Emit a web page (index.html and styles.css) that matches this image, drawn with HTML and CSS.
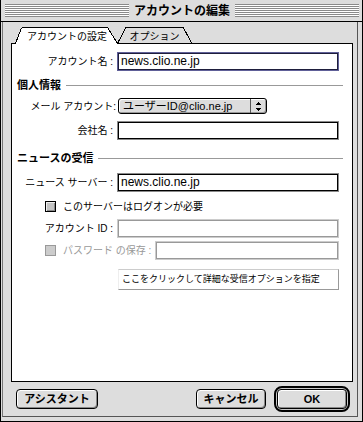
FILE: index.html
```html
<!DOCTYPE html>
<html lang="ja">
<head>
<meta charset="utf-8">
<title>アカウントの編集</title>
<link rel="stylesheet" href="styles.css">
</head>
<body>
<div class="window">
  <div class="titlebar">
    <div class="stripes"></div>
    <div class="title">アカウントの編集</div>
    <div class="stripes"></div>
  </div>
  <div class="content">
    <svg class="tabs" width="342" height="17" viewBox="0 0 342 17" shape-rendering="crispEdges">
      <path d="M106.5 16.5 L114.5 1 L115.5 0.5 H171.5 L172.5 1 L181 16.5" fill="#dddddd" stroke="#000"/>
      <path d="M0 17 V16 H4 L10 1 H97 L107 17 Z" fill="#fff"/>
      <path d="M0.5 17 V16.5 H4.5 L10 2 L11.5 0.5 H96.5 L106.5 16.5 H341.5 V17" fill="none" stroke="#000"/>
      <text class="tab-label" x="56" y="13" text-anchor="middle">アカウントの設定</text>
      <text class="tab-label" x="143.5" y="13" text-anchor="middle">オプション</text>
    </svg>
    <div class="panel">
      <div class="row r-name">
        <span class="label">アカウント名 :</span>
        <div class="field focus">news.clio.ne.jp</div>
      </div>
      <div class="heading h-personal"><span class="heading-text">個人情報</span><i class="rule"></i></div>
      <div class="row r-mail">
        <span class="label label-mail">メール アカウント:</span>
        <div class="popup">
          <span class="popup-text">ユーザーID@clio.ne.jp</span>
          <span class="popup-arrows">
            <svg width="5" height="9" viewBox="0 0 5 9" shape-rendering="crispEdges"><polygon points="2.5,0 5,3 0,3" fill="#000"/><polygon points="0,6 5,6 2.5,9" fill="#000"/></svg>
          </span>
        </div>
      </div>
      <div class="row r-company">
        <span class="label">会社名 :</span>
        <div class="field"></div>
      </div>
      <div class="heading h-news"><span class="heading-text">ニュースの受信</span><i class="rule"></i></div>
      <div class="row r-server">
        <span class="label">ニュース サーバー :</span>
        <div class="field">news.clio.ne.jp</div>
      </div>
      <div class="check-row r-logon">
        <span class="checkbox"></span>
        <span class="check-label">このサーバーはログオンが必要</span>
      </div>
      <div class="row r-account">
        <span class="label">アカウント ID :</span>
        <div class="field disabled"></div>
      </div>
      <div class="check-row r-password">
        <span class="checkbox disabled"></span>
        <span class="check-label disabled">パスワード の保存 :</span>
        <div class="field disabled pw"></div>
      </div>
      <div class="bevel">ここをクリックして詳細な受信オプションを指定</div>
    </div>
    <div class="footer">
      <div class="btn btn-assist">アシスタント</div>
      <div class="btn btn-cancel">キャンセル</div>
      <div class="default-ring"><div class="btn btn-ok">OK</div></div>
    </div>
  </div>
</div>
</body>
</html>
```

FILE: styles.css
```css
* { box-sizing: border-box; }
html, body { margin: 0; padding: 0; }
body {
  width: 363px;
  height: 422px;
  overflow: hidden;
  background: #dddddd;
  color: #000;
  font-family: "Liberation Sans", "Noto Sans CJK JP", sans-serif;
}
.window {
  width: 363px;
  height: 422px;
  border: 1px solid #000;
  border-top: 0;
  background: #dddddd;
  display: flex;
  flex-direction: column;
}
.titlebar {
  flex: none;
  height: 22px;
  border-bottom: 1px solid #000;
  display: flex;
  align-items: center;
  gap: 5px;
  padding: 0 3px 0 4px;
}
.stripes {
  flex: 1;
  height: 13px;
  background: repeating-linear-gradient(to bottom, #8a8a8a 0 1px, #ffffff 1px 2px);
}
.title {
  font-weight: bold;
  font-size: 12px;
  line-height: 14px;
  white-space: nowrap;
}
.content {
  flex: 1;
  margin: 0 4px 4px 1px;
  border-left: 1px solid #777;
  border-right: 1px solid #555;
  border-bottom: 1px solid #555;
  padding: 5px 4px 0 8px;
  display: flex;
  flex-direction: column;
}
.tabs { display: block; flex: none; }
.tab-label {
  font-family: "Liberation Sans", "Noto Sans CJK JP", sans-serif;
  font-size: 10px;
  fill: #000;
}
.panel {
  flex: none;
  width: 342px;
  height: 338px;
  background: #fff;
  border: 1px solid #000;
  border-top: 0;
  display: flex;
  flex-direction: column;
}
.row {
  display: grid;
  grid-template-columns: 101px 220px;
  column-gap: 5px;
  align-items: center;
}
.label {
  font-size: 10px;
  line-height: 13px;
  text-align: right;
  white-space: nowrap;
}
.label-mail { margin-right: -3px; }
.field {
  width: 220px;
  height: 17px;
  border: 1px solid #000;
  box-shadow: 0 0 0 1px #8a8a8a;
  background: #fff;
  font-family: "Liberation Sans", sans-serif;
  font-size: 12px;
  line-height: 15px;
  padding: 0 2px;
  white-space: nowrap;
}
.field.focus {
  border-color: #1e1e3c;
  box-shadow: 0 0 0 1px #606098;
}
.field.disabled {
  border-color: #999;
  box-shadow: 0 0 0 1px #cccccc;
}
.r-name { margin-top: 9px; }
.heading {
  display: flex;
  align-items: center;
  height: 13px;
  padding: 0 9px 0 5px;
}
.heading-text {
  font-weight: bold;
  font-size: 11px;
  line-height: 13px;
  white-space: nowrap;
}
.rule {
  flex: 1;
  height: 1px;
  background: #999;
  margin-left: 5px;
}
.h-personal { margin-top: 9px; }
.r-mail { margin-top: 6px; }
.popup {
  width: 149px;
  height: 16px;
  border: 1px solid #000;
  border-radius: 3px;
  background: #dddddd;
  box-shadow: inset 1px 1px 0 #fff, inset -1px -1px 0 #999;
  display: flex;
  align-items: center;
  font-size: 11px;
  line-height: 14px;
}
.popup-text { padding-left: 4px; white-space: nowrap; }
.popup-arrows {
  margin-left: auto;
  width: 16px;
  height: 14px;
  border-left: 1px solid #555;
  display: flex;
  align-items: center;
  justify-content: center;
}
.popup-arrows svg { display: block; }
.r-company { margin-top: 8px; }
.h-news { margin-top: 13px; }
.r-server { margin-top: 9px; }
.check-row {
  display: flex;
  align-items: center;
  height: 13px;
  padding-left: 33px;
}
.checkbox {
  width: 11px;
  height: 11px;
  flex: none;
  border: 1px solid #000;
  background: #c4c4c4;
  box-shadow: inset 1px 1px 0 #eee, inset -1px -1px 0 #888;
}
.checkbox.disabled {
  border-color: #999;
  background: #cccccc;
  box-shadow: none;
}
.check-label {
  margin-left: 7px;
  font-size: 10px;
  line-height: 13px;
  white-space: nowrap;
}
.check-label.disabled { color: #999; }
.r-logon { margin-top: 9px; }
.r-account { margin-top: 7px; }
.r-password { margin-top: 5px; height: 17px; }
.field.pw {
  width: 182px;
  margin-left: auto;
  margin-right: 14px;
}
.bevel {
  margin-top: 10px;
  margin-left: 106px;
  width: 221px;
  height: 21px;
  border-top: 1px solid #cccccc;
  border-left: 1px solid #eeeeee;
  border-right: 1px solid #999;
  border-bottom: 1px solid #999;
  padding-left: 3px;
  font-size: 9px;
  line-height: 19px;
  white-space: nowrap;
}
.footer {
  flex: none;
  height: 26px;
  margin-top: 4px;
  display: flex;
  align-items: center;
  padding: 0 3px 0 5px;
}
.btn {
  height: 20px;
  border: 1px solid #000;
  border-radius: 4px;
  background: #dddddd;
  box-shadow: inset 1px 1px 0 #fff, inset -1px -1px 0 #888;
  font-weight: bold;
  font-size: 11px;
  line-height: 18px;
  text-align: center;
  white-space: nowrap;
}
.btn-assist { width: 82px; }
.btn-cancel { width: 70px; margin-left: auto; }
.default-ring {
  width: 76px;
  height: 26px;
  margin-left: 8px;
  border: 2px solid #000;
  border-radius: 8px;
  padding: 1px;
  background: #c8c8c8;
}
.btn-ok { width: 100%; height: 100%; }
```
